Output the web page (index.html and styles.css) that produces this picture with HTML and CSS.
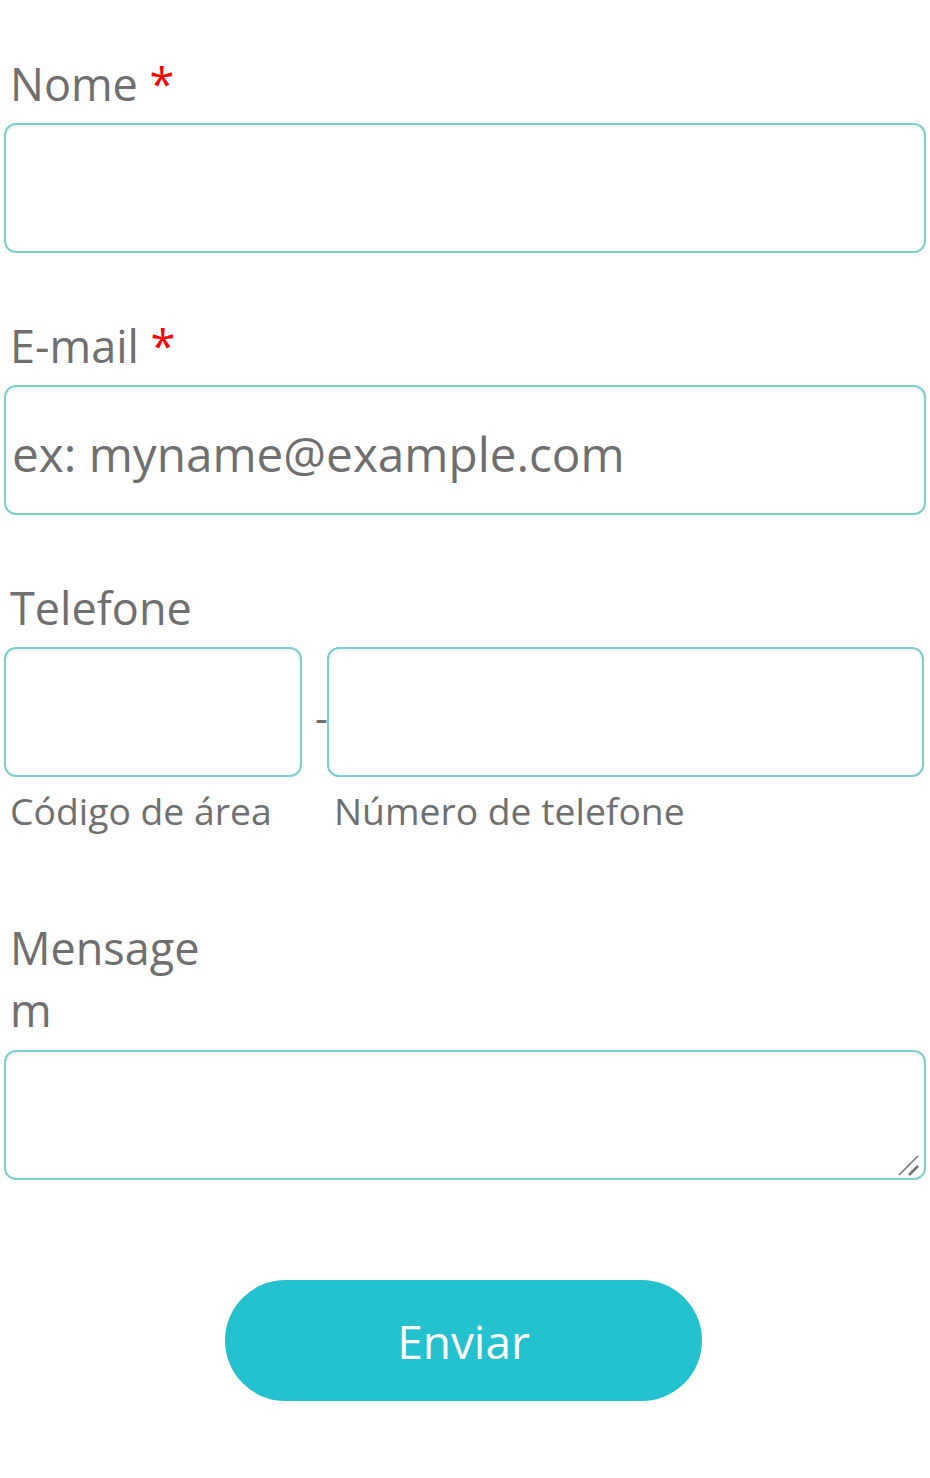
FILE: index.html
```html
<!DOCTYPE html>
<html lang="pt-BR">
<head>
  <meta charset="UTF-8">
  <meta name="viewport" content="width=device-width, initial-scale=1.0">
  <title>Contato</title>
  <link rel="stylesheet" href="styles.css">
</head>
<body>
  <form class="form">
    <div class="field">
      <label class="label" for="nome">Nome <span class="req">*</span></label>
      <input id="nome" class="input" type="text">
    </div>
    <div class="field">
      <label class="label" for="email">E-mail <span class="req">*</span></label>
      <input id="email" class="input" type="email" placeholder="ex: myname@example.com">
    </div>
    <div class="field phone-field">
      <label class="label" for="area">Telefone</label>
      <div class="phone">
        <div class="phone-part area">
          <input id="area" class="input" type="tel">
          <span class="sublabel">Código de área</span>
        </div>
        <span class="dash">-</span>
        <div class="phone-part number">
          <input id="numero" class="input" type="tel">
          <span class="sublabel">Número de telefone</span>
        </div>
      </div>
    </div>
    <div class="field message">
      <label class="label" for="msg">Mensagem</label>
      <div class="textarea-wrap">
        <textarea id="msg" class="input textarea"></textarea>
        <svg class="grip" width="24" height="24" viewBox="0 0 24 24">
          <line x1="1" y1="22" x2="20" y2="3" stroke="#6f6f6f" stroke-width="1.5"/>
          <line x1="11" y1="22" x2="20" y2="13" stroke="#6f6f6f" stroke-width="2.5"/>
        </svg>
      </div>
    </div>
    <div class="actions">
      <button type="submit" class="submit">Enviar</button>
    </div>
  </form>
</body>
</html>
```

FILE: styles.css
```css
:root {
  --text: #6f6f6f;
  --border: #7ccfcb;
  --accent: #23c1cd;
  --req: #ff0000;
}
* { box-sizing: border-box; }
body {
  margin: 0;
  font-family: "Open Sans", "Liberation Sans", sans-serif;
  color: var(--text);
  background: #ffffff;
}
.form {
  padding: 53px 4px 40px 4px;
}
.field {
  margin-bottom: 62px;
}
.label {
  display: block;
  width: 215px;
  padding-left: 6px;
  margin-bottom: 8px;
  font-size: 45px;
  line-height: 62px;
  white-space: nowrap;
}
.field.message .label {
  white-space: normal;
  overflow-wrap: break-word;
  margin-bottom: 9px;
}
.req {
  color: var(--req);
}
.input {
  display: block;
  width: 922px;
  height: 130px;
  padding: 7px 6px 0 6px;
  border: 2px solid var(--border);
  border-radius: 12px;
  background: #fff;
  box-shadow: inset 0 2px 3px rgba(0,0,0,0.07);
  font-family: inherit;
  font-size: 47.7px;
  color: var(--text);
  outline: none;
}
.input::placeholder {
  color: var(--text);
  opacity: 1;
}
.phone {
  display: flex;
  align-items: flex-start;
}
.phone-part {
  display: flex;
  flex-direction: column;
}
.phone-part.area .input {
  width: 298px;
}
.phone-part.number .input {
  width: 597px;
}
.dash {
  width: 25px;
  padding-left: 13px;
  margin-top: 40px;
  font-size: 40px;
  line-height: 60px;
  overflow: hidden;
}
.sublabel {
  display: block;
  padding-left: 6px;
  margin-top: 11px;
  font-size: 37.3px;
  line-height: 45px;
}
.phone-part.number .sublabel {
  padding-left: 7px;
}
.field.phone-field {
  margin-bottom: 84px;
}
.textarea-wrap {
  position: relative;
  width: 922px;
}
.textarea {
  resize: none;
}
.grip {
  position: absolute;
  right: 4px;
  bottom: 3px;
}
.actions {
  display: flex;
  justify-content: center;
  padding-top: 38px;
  padding-right: 3px;
}
.submit {
  width: 477px;
  height: 121px;
  border: none;
  border-radius: 61px;
  background: var(--accent);
  color: #fff;
  font-family: inherit;
  font-size: 46px;
  cursor: pointer;
}
```
